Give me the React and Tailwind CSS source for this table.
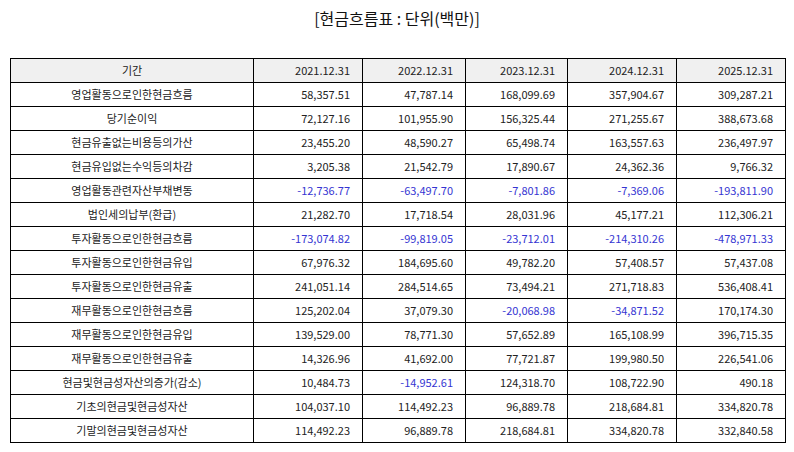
import React from "react";

const cols = ["w-[243px]", "w-[109px]", "w-[103px]", "w-[102px]", "w-[109px]", "w-[109px]"];

const header = ["기간", "2021.12.31", "2022.12.31", "2023.12.31", "2024.12.31", "2025.12.31"];

const rows = [
  ["영업활동으로인한현금흐름", "58,357.51", "47,787.14", "168,099.69", "357,904.67", "309,287.21"],
  ["당기순이익", "72,127.16", "101,955.90", "156,325.44", "271,255.67", "388,673.68"],
  ["현금유출없는비용등의가산", "23,455.20", "48,590.27", "65,498.74", "163,557.63", "236,497.97"],
  ["현금유입없는수익등의차감", "3,205.38", "21,542.79", "17,890.67", "24,362.36", "9,766.32"],
  ["영업활동관련자산부채변동", "-12,736.77", "-63,497.70", "-7,801.86", "-7,369.06", "-193,811.90"],
  ["법인세의납부(환급)", "21,282.70", "17,718.54", "28,031.96", "45,177.21", "112,306.21"],
  ["투자활동으로인한현금흐름", "-173,074.82", "-99,819.05", "-23,712.01", "-214,310.26", "-478,971.33"],
  ["투자활동으로인한현금유입", "67,976.32", "184,695.60", "49,782.20", "57,408.57", "57,437.08"],
  ["투자활동으로인한현금유출", "241,051.14", "284,514.65", "73,494.21", "271,718.83", "536,408.41"],
  ["재무활동으로인한현금흐름", "125,202.04", "37,079.30", "-20,068.98", "-34,871.52", "170,174.30"],
  ["재무활동으로인한현금유입", "139,529.00", "78,771.30", "57,652.89", "165,108.99", "396,715.35"],
  ["재무활동으로인한현금유출", "14,326.96", "41,692.00", "77,721.87", "199,980.50", "226,541.06"],
  ["현금및현금성자산의증가(감소)", "10,484.73", "-14,952.61", "124,318.70", "108,722.90", "490.18"],
  ["기초의현금및현금성자산", "104,037.10", "114,492.23", "96,889.78", "218,684.81", "334,820.78"],
  ["기말의현금및현금성자산", "114,492.23", "96,889.78", "218,684.81", "334,820.78", "332,840.58"],
];

function Cell({ i, children, head }) {
  const neg = typeof children === "string" && children.startsWith("-");
  return (
    <div
      className={`${cols[i]} h-[24px] box-border border-r border-b border-black flex items-center ${
        i === 0 ? "justify-center" : "justify-end pr-[12px]"
      } ${neg ? "text-[#3535d2]" : "text-[#222]"} ${head ? "bg-[#f0f0f0]" : "bg-white"}`}
    >
      {children}
    </div>
  );
}

export default function App() {
  return (
    <div
      className="w-[794px] h-[452px] bg-white text-[11px]"
      style={{ fontFamily: '"Noto Sans CJK KR", "Noto Sans", sans-serif' }}
    >
      <div className="h-[58px] pt-[5px] flex justify-center">
        <div className="text-[16px] leading-[26px] text-[#111]">[현금흐름표 : 단위(백만)]</div>
      </div>
      <div className="ml-[10px] w-[776px] border-l border-t border-black">
        <div className="flex">
          {header.map((h, i) => (
            <Cell key={i} i={i} head>
              {h}
            </Cell>
          ))}
        </div>
        {rows.map((r, ri) => (
          <div className="flex" key={ri}>
            {r.map((c, i) => (
              <Cell key={i} i={i}>
                {c}
              </Cell>
            ))}
          </div>
        ))}
      </div>
    </div>
  );
}
